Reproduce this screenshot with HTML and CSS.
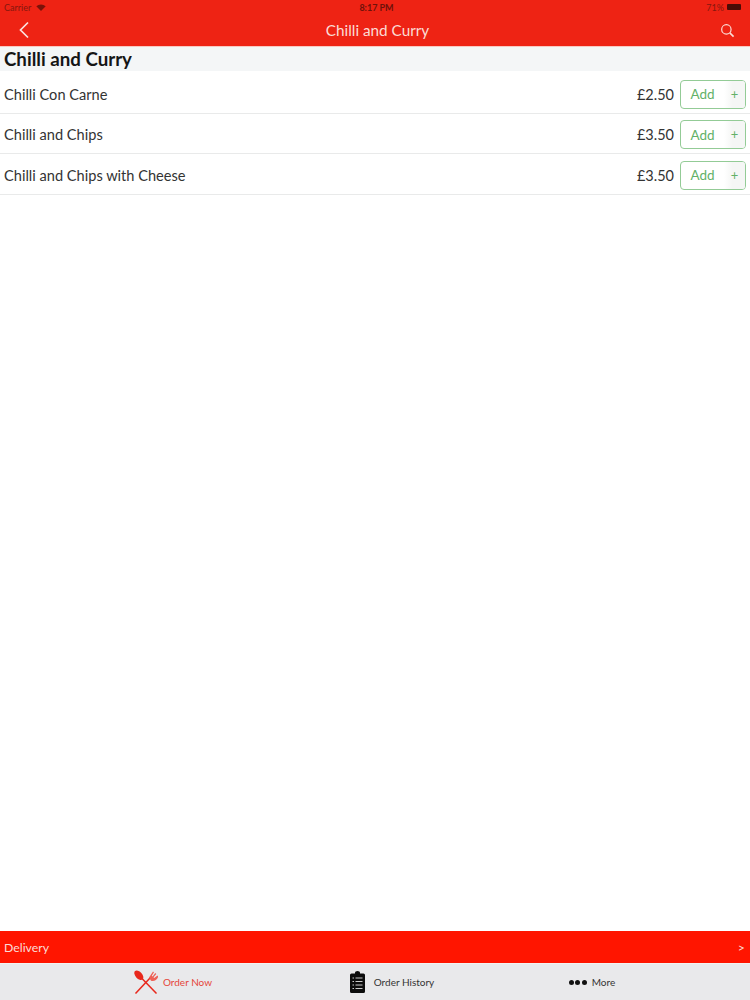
FILE: index.html
```html
<!DOCTYPE html>
<html lang="en">
<head>
  <meta charset="UTF-8" />
  <title>Chilli and Curry</title>
  <link rel="stylesheet" href="styles.css">
</head>
<body>
  <header class="top-bar">
    <div class="status-bar">
      <div class="status-left">
        <span>Carrier</span>
        <svg class="wifi" viewBox="0 0 12 9"><path d="M6 9 0 3a8.500 8.500 0 0 1 12 0z" fill="#7a1209"/></svg>
      </div>
      <span class="status-time">8:17 PM</span>
      <div class="status-right">
        <span>71%</span>
        <span class="battery"></span>
      </div>
    </div>
    <div class="nav-bar">
      <svg class="nav-back" viewBox="0 0 12 18"><path d="M10 1.500 2.500 9l7.500 7.500" fill="none" stroke="#fbe3df" stroke-width="1.700"/></svg>
      <span class="nav-title">Chilli and Curry</span>
      <svg class="nav-search" viewBox="0 0 16 16"><circle cx="6.800" cy="6.800" r="5" fill="none" stroke="#fbdcd6" stroke-width="1.300"/><path d="m10.500 10.500 4 4" stroke="#fbdcd6" stroke-width="1.700"/></svg>
    </div>
  </header>

  <main class="menu">
    <h2 class="section-title">Chilli and Curry</h2>
    <div class="items">
      <div class="item">
        <span class="item-name">Chilli Con Carne</span>
        <span class="item-price">£2.50</span>
        <div class="add-btn"><span class="add-label">Add</span><span class="add-plus">+</span></div>
      </div>
      <div class="item">
        <span class="item-name">Chilli and Chips</span>
        <span class="item-price">£3.50</span>
        <div class="add-btn"><span class="add-label">Add</span><span class="add-plus">+</span></div>
      </div>
      <div class="item">
        <span class="item-name">Chilli and Chips with Cheese</span>
        <span class="item-price">£3.50</span>
        <div class="add-btn"><span class="add-label">Add</span><span class="add-plus">+</span></div>
      </div>
    </div>
  </main>

  <div class="delivery-bar">
    <span>Delivery</span>
    <span>&gt;</span>
  </div>

  <nav class="tab-bar">
    <div class="tab tab-active">
      <svg class="tab-icon-food" viewBox="0 0 24 24">
        <path d="M22.500 23.500 7 7.500" stroke="#e8281c" stroke-width="1.500"/>
        <ellipse cx="4.800" cy="5.200" rx="3.400" ry="5.600" transform="rotate(-42 4.800 5.200)" fill="#e8281c"/>
        <path d="M1.500 23.500 16.500 7.500" stroke="#e8281c" stroke-width="1.500"/>
        <path d="M15 7.500 19 1.500l1 .7-2.200 3.600.8.600 2.700-3.300 1 .9-2.800 3.300.7.700 3.300-2.400.7 1c-.8 3-4 5.300-7.200 4.200z" fill="#ee6156"/>
      </svg>
      <span>Order Now</span>
    </div>
    <div class="tab">
      <svg class="tab-icon-clip" viewBox="0 0 15 22">
        <path d="M5 2.500V1.500a2.500 1.500 0 0 1 5 0v1h3.500a1.500 1.500 0 0 1 1.500 1.500v16.500a1.500 1.500 0 0 1-1.500 1.500h-12A1.500 1.500 0 0 1 0 20.500V4a1.500 1.500 0 0 1 1.500-1.500z" fill="#0c0c0c"/>
        <path d="M2.500 7h1.500M5.500 7h7M2.500 10.500h1.500M5.500 10.500h7M2.500 14h1.500M5.500 14h7M2.500 17.500h1.500M5.500 17.500h7" stroke="#c9c9c9" stroke-width="1"/>
      </svg>
      <span>Order History</span>
    </div>
    <div class="tab">
      <span class="dots"><i></i><i></i><i></i></span>
      <span>More</span>
    </div>
  </nav>
</body>
</html>
```

FILE: styles.css
```css
* {
  box-sizing: border-box;
}
html, body {
  height: 100%;
}
body {
  margin: 0;
  display: flex;
  flex-direction: column;
  font-family: "Lato", "Liberation Sans", sans-serif;
  background: #fff;
  color: #333;
}

/* top red area */
.top-bar {
  height: 47px;
  background: #ee2314;
  border-bottom: 1px solid #f9c9c3;
}
.status-bar {
  height: 14px;
  padding: 0 1px 0 4px;
  display: grid;
  grid-template-columns: 1fr auto 1fr;
  align-items: center;
  font-size: 9px;
  color: #86170e;
}
.status-left {
  display: flex;
  align-items: center;
  gap: 5px;
}
.wifi {
  width: 10px;
  height: 7px;
}
.status-time {
  color: #6e120a;
  font-weight: 700;
}
.status-right {
  display: flex;
  justify-content: flex-end;
  align-items: center;
  gap: 3px;
  padding-right: 8px;
}
.battery {
  width: 14px;
  height: 6px;
  background: #4a0c06;
  border-radius: 1px;
}
.nav-bar {
  height: 32px;
  padding: 0 15px 0 18px;
  display: flex;
  align-items: center;
  justify-content: space-between;
}
.nav-back {
  width: 12px;
  height: 18px;
}
.nav-title {
  font-size: 15.3px;
  color: #fbdcd6;
  margin-left: 5px;
}
.nav-search {
  width: 15px;
  height: 15px;
}

/* menu list */
.menu {
  flex: 1;
}
.section-title {
  margin: 0;
  height: 24px;
  padding-left: 4px;
  background: #f4f6f7;
  font-size: 18.7px;
  line-height: 24px;
  font-weight: 700;
  color: #151515;
}
.items {
  padding-top: 2px;
}
.item {
  height: 40.5px;
  padding: 3px 4px 0;
  display: flex;
  align-items: center;
  border-bottom: 1px solid #e9eaea;
  font-size: 14.6px;
}
.item-name {
  flex: 1;
}
.item-price {
  margin-right: 6px;
  font-size: 14.5px;
}
.add-btn {
  width: 66px;
  height: 29px;
  display: flex;
  align-items: center;
  border: 1px solid #93cb96;
  border-radius: 4px;
  color: #62b167;
  overflow: hidden;
}
.add-label {
  flex: 1;
  text-align: center;
  font-size: 13.5px;
}
.add-plus {
  width: 21px;
  height: 100%;
  line-height: 27px;
  text-align: center;
  background: linear-gradient(to right, #fff, #f5f6f5 40%);
  font-size: 13px;
}

/* bottom */
.delivery-bar {
  height: 32px;
  padding: 0 5px 0 4px;
  display: flex;
  align-items: center;
  justify-content: space-between;
  background: #ff1500;
  color: #fbdcd6;
  font-size: 12.3px;
}
.tab-bar {
  height: 37px;
  padding-left: 63px;
  display: grid;
  grid-template-columns: 220px 218px 182px;
  align-items: center;
  background: #e9e9eb;
  border-top: 1px solid #f2f2f2;
  font-size: 10px;
  color: #333;
}
.tab {
  display: flex;
  align-items: center;
  justify-content: center;
  gap: 5px;
}
.tab-active {
  color: #e5453a;
}
.tab-icon-food {
  width: 24px;
  height: 24px;
}
.tab-icon-clip {
  width: 15px;
  height: 22px;
  margin-right: 4px;
}
.dots {
  display: flex;
  gap: 1.5px;
}
.dots i {
  width: 5px;
  height: 5px;
  border-radius: 50%;
  background: #111;
}
```
